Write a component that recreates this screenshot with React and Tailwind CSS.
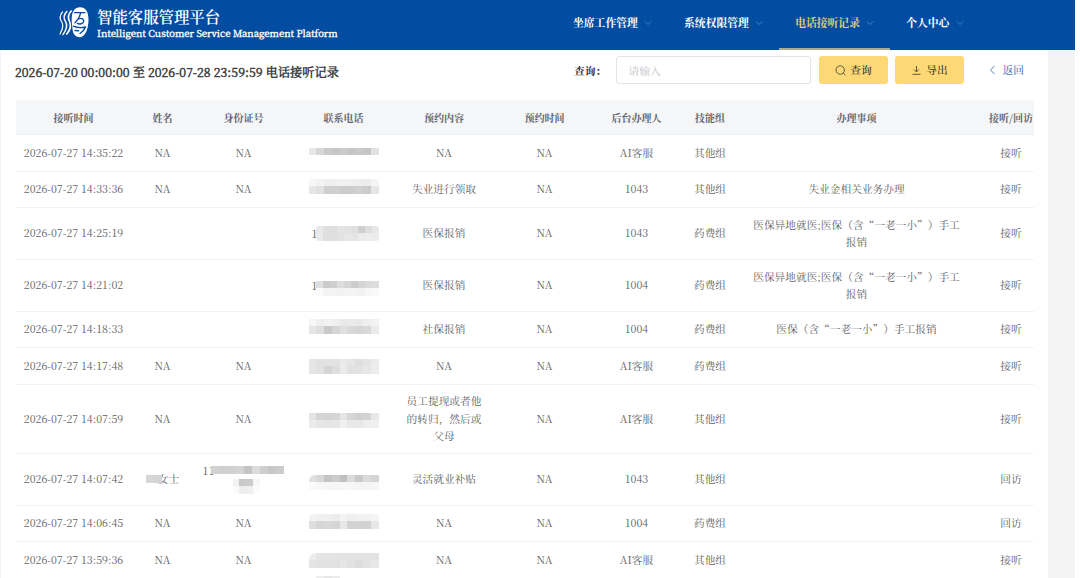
const navItems = [
  { label: '坐席工作管理' },
  { label: '系统权限管理' },
  { label: '电话接听记录', active: true },
  { label: '个人中心' },
];

const columns = ['接听时间', '姓名', '身份证号', '联系电话', '预约内容', '预约时间', '后台办理人', '技能组', '办理事项', '接听/回访'];

const LONG_MATTER = '医保异地就医;医保（含“一老一小”）手工报销';

// mask: grey levels of each pixelated band, from top to bottom
const records = [
  { time: '2026-07-27 14:35:22', name: 'NA', idNo: 'NA', content: 'NA', handler: 'AI客服', group: '其他组', matter: '', type: '接听', height: 'h-[37px]', maskClass: 'mt-[13px]',
    mask: [[231, 215, 202, 199, 202, 198, 201, 198, 226]] },
  { time: '2026-07-27 14:33:36', name: 'NA', idNo: 'NA', content: '失业进行领取', handler: '1043', group: '其他组', matter: '失业金相关业务办理', type: '接听', height: 'h-[36px]', maskClass: 'mt-[7px] rounded-t-[4px]',
    mask: [[246, 243, 240, 240, 241, 240, 238, 237, 245], [231, 225, 207, 208, 204, 204, 208, 203, 231]] },
  { time: '2026-07-27 14:25:19', name: '', idNo: '', content: '医保报销', handler: '1043', group: '药费组', matter: LONG_MATTER, type: '接听', height: 'h-[52px]', maskClass: 'mt-[18px] rounded-[3px]', prefix: '1',
    mask: [[233, 224, 222, 229, 227, 223, 207, 222, 231], [234, 224, 223, 226, 231, 229, 235, 237, 236]] },
  { time: '2026-07-27 14:21:02', name: '', idNo: '', content: '医保报销', handler: '1004', group: '药费组', matter: LONG_MATTER, type: '接听', height: 'h-[52px]', maskClass: 'mt-[21px]', prefix: '1',
    mask: [[223, 203, 206, 221, 214, 204, 213, 219, 222], [251, 244, 243, 242, 243, 244, 242, 247, 250]] },
  { time: '2026-07-27 14:18:33', name: '', idNo: '', content: '社保报销', handler: '1004', group: '药费组', matter: '医保（含“一老一小”）手工报销', type: '接听', height: 'h-[36px]', maskClass: 'mt-[7px]',
    mask: [[246, 239, 243, 239, 233, 234, 232, 239, 242], [230, 222, 201, 213, 224, 216, 213, 217, 235]] },
  { time: '2026-07-27 14:17:48', name: 'NA', idNo: 'NA', content: 'NA', handler: 'AI客服', group: '药费组', matter: '', type: '接听', height: 'h-[37px]', maskClass: 'mt-[11px]',
    mask: [[230, 225, 227, 226, 234, 229, 223, 228, 235], [230, 226, 213, 222, 235, 225, 226, 231, 237]] },
  { time: '2026-07-27 14:07:59', name: 'NA', idNo: 'NA', content: '员工提现或者他的转归，然后或父母', handler: 'AI客服', group: '其他组', matter: '', type: '接听', height: 'h-[69px]', maskClass: 'mt-[28px]',
    mask: [[228, 213, 212, 214, 229, 214, 208, 211, 232], [236, 231, 229, 230, 240, 232, 232, 238, 240]] },
  { time: '2026-07-27 14:07:42', masked: true, content: '灵活就业补贴', handler: '1043', group: '其他组', matter: '', type: '回访', height: 'h-[52px]', maskClass: 'mt-[21px] rounded-tl-[6px]',
    mask: [[224, 216, 196, 204, 191, 219, 201, 219, 213], [250, 247, 246, 245, 247, 246, 244, 244, 246]] },
  { time: '2026-07-27 14:06:45', name: 'NA', idNo: 'NA', content: 'NA', handler: '1004', group: '药费组', matter: '', type: '回访', height: 'h-[36px]', maskClass: 'mt-[8px] rounded-t-[4px]',
    mask: [[242, 240, 239, 236, 243, 239, 241, 241, 244], [222, 214, 216, 213, 232, 210, 211, 210, 231]] },
  { time: '2026-07-27 13:59:36', name: 'NA', idNo: 'NA', content: 'NA', handler: 'AI客服', group: '其他组', matter: '', type: '接听', height: 'h-[37px]', maskClass: 'mt-[11px] -mb-[12px] rounded-tl-[7px]',
    mask: [[236, 229, 228, 227, 227, 226, 227, 226, 226], [229, 226, 226, 225, 230, 225, 221, 226, 232], [255, 255, 255, 255, 255, 255, 255, 255, 255], [255, 238, 230, 235, 255, 255, 255, 255, 255]] },
];

const GRID = 'grid grid-cols-[116px_62px_100px_100px_101px_100px_84px_63px_230px_79px] w-[1035px]';

const Mosaic = ({ rows, className }) => (
  <div className={`relative overflow-hidden ${className}`}>
    {rows.map((row, i) => (
      <div key={i} className="flex h-[7.8px]">
        {row.map((level, j) => (
          <span key={j} className="flex-1" style={{ backgroundColor: `rgb(${level}, ${level}, ${level})` }} />
        ))}
      </div>
    ))}
  </div>
);

const Chevron = () => (
  <svg className="ml-[6.3px] h-2 w-2" viewBox="0 0 8 8" fill="none" stroke="#5f8fc4" strokeWidth="0.8">
    <path d="M1 2.5 4 5.5 7 2.5" />
  </svg>
);

const Logo = () => (
  <svg className="h-[32px] w-[32px]" viewBox="0 0 32 32" fill="none">
    <g stroke="#fff" strokeLinecap="round">
      <path d="M4.5 5C1 9 1.500 11.500 3.500 14.500S5.500 21 2 27" strokeWidth="1.2" />
      <path d="M8.800 4.500C5 8.500 5.500 11.500 7.500 14.500S9 22 5 27.500" strokeWidth="1.500" />
      <path d="M13.200 4C9.500 8 9.800 11 11.500 14.500S13 22 8.800 27" strokeWidth="1.700" />
    </g>
    <path d="M22 .2C27.800 .2 30.500 5 30.500 12.500 30.500 22 27 30.200 22 30.200c-5 0-7-3.500-7.500-8.200C14.200 17 13.300 14 13.800 10 14.300 4 17 .2 22 .2Z" fill="#fff" />
    <g stroke="#024da1" strokeWidth="1.400" strokeLinecap="round" strokeLinejoin="round">
      <path d="M16.500 5.600h10.500" />
      <path d="M22.500 6.200c-.8 3.800-2.500 6.800-5.500 9.500" />
      <path d="M20.800 11.800c3-1.200 5.500.2 4.800 2.800-.6 2.200-4 3-6.200 1.800" />
      <path d="M15.500 19.200c3.500 1.600 8 1.800 12 .8-1 2.800-2.800 4.800-5.500 6.500" />
      <path d="M17 23.500l3.500.2" />
    </g>
  </svg>
);

const Header = () => (
  <header className="flex h-[49.5px] w-[1075px] bg-[#024da1] text-white">
    <div className="flex w-[557px] items-start pl-[58px] pt-[7px]">
      <Logo />
      <div className="ml-[7px] whitespace-nowrap">
        <h1 className="-mt-px text-[15.4px] leading-[20px] font-semibold">智能客服管理平台</h1>
        <p className="mt-px text-[9.6px] leading-[12px] [-webkit-text-stroke:0.35px_white]">Intelligent Customer Service Management Platform</p>
      </div>
    </div>
    <nav className="flex text-[10.8px] font-bold">
      {navItems.map((item) => (
        <a
          key={item.label}
          className={`flex items-center border-b-[2.5px] px-4 pb-[2px] ${item.active ? 'border-[#a5ae91] text-[#e6cd83]' : 'border-transparent'}`}
        >
          {item.label}
          <Chevron />
        </a>
      ))}
    </nav>
  </header>
);

const Toolbar = () => (
  <div className="flex h-[50px] items-start pt-[6.5px] pl-[14px] text-[10.7px] text-[#303133]">
    <h2 className="w-[559px] text-[12.2px] leading-[31px] whitespace-nowrap [-webkit-text-stroke:0.4px_#303133]">
      2026-07-20 00:00:00 至 2026-07-28 23:59:59 电话接听记录
    </h2>
    <label className="w-[41.5px] leading-[29px] font-bold">查询：</label>
    <input
      placeholder="请输入"
      className="h-[28px] w-[195.5px] rounded-[3px] border border-[#e2e4e9] bg-white px-[12px] outline-none placeholder:text-[#c0c4cc]"
    />
    <button className="ml-2 flex h-[28px] w-[69px] items-center justify-center gap-1 rounded-[3px] bg-[#fdd976] font-medium">
      <svg className="h-[11px] w-[11px]" viewBox="0 0 11 11" fill="none" stroke="#4d4a3c" strokeWidth="0.9">
        <circle cx="5.2" cy="5" r="4.200" />
        <path d="M8.200 8 10.500 10.300" />
      </svg>
      查询
    </button>
    <button className="ml-[7px] flex h-[28px] w-[69px] items-center justify-center gap-1 rounded-[3px] bg-[#fdd976] font-medium">
      <svg className="h-[11px] w-[11px]" viewBox="0 0 11 11" fill="none" stroke="#4d4a3c" strokeWidth="0.9">
        <path d="M5.500 1v5.800M3 4.500l2.500 2.500L8 4.500M1.500 9.300h8" />
      </svg>
      导出
    </button>
    <a className="ml-[24.5px] flex h-[28px] items-center font-medium text-[#3f78b5]">
      <svg className="mr-[7px] h-[10px] w-[7px]" viewBox="0 0 7 10" fill="none" stroke="#5d86b0" strokeWidth="1">
        <path d="M5.500 1 1.500 5l4 4" />
      </svg>
      返回
    </a>
  </div>
);

const MaskedName = () => (
  <div className="flex items-center justify-center">
    <Mosaic rows={[[214, 212]]} className="z-10 -mr-[4px] w-[16px]" />
    女士
  </div>
);

const MaskedId = () => (
  <div className="self-start pt-[8px]">
    <div className="flex items-center justify-center leading-[17px]">
      11
      <Mosaic rows={[[210, 208, 209, 212, 196, 220, 206, 199, 203]]} className="-ml-[3px] w-[73px]" />
    </div>
    <Mosaic rows={[[242, 201, 203, 246], [249, 238, 239, 251]]} className="ml-[39px] w-[27px] rounded-b-[6px]" />
  </div>
);

const RecordRow = ({ record }) => (
  <div className={`${GRID} ${record.height} items-center border-b border-[#f0f2f5] text-center leading-[17.5px]`}>
    <div className="whitespace-nowrap">{record.time}</div>
    {record.masked ? <MaskedName /> : <div>{record.name}</div>}
    {record.masked ? <MaskedId /> : <div>{record.idNo}</div>}
    <div className={`flex items-start self-start ${record.prefix ? 'pl-[18px]' : 'pl-[15px]'}`}>
      {record.prefix && <span className="-mr-[2px] mt-[17px] w-[6px]">{record.prefix}</span>}
      <Mosaic rows={record.mask} className={`${record.prefix ? 'w-[63px]' : 'w-[70px]'} ${record.maskClass}`} />
    </div>
    <div className="px-[10px]">{record.content}</div>
    <div>NA</div>
    <div>{record.handler}</div>
    <div>{record.group}</div>
    <div className="px-[9px] [text-spacing-trim:space-all]">{record.matter}</div>
    <div>{record.type}</div>
  </div>
);

const RecordTable = () => (
  <div className="ml-[14.5px] w-[1018px] overflow-hidden">
    <div className={`${GRID} h-[35px] items-center border-b border-[#ebeef5] bg-[#f5f6f8] pt-[2px] text-center text-[10px] font-bold text-[#5f646e]`}>
      {columns.map((title) => (
        <div key={title} className="whitespace-nowrap">{title}</div>
      ))}
    </div>
    <div className="text-[10.7px] text-[#606266]">
      {records.map((record) => (
        <RecordRow key={record.time} record={record} />
      ))}
    </div>
  </div>
);

export default function App() {
  return (
    <div className="h-[578px] w-[1080px] overflow-hidden bg-white font-['Noto_Serif_CJK_SC','Noto_Sans_CJK_SC',serif]">
      <Header />
      <main className="h-[529px] w-[1075px] bg-[#f4f4f5]">
        <div className="ml-px h-full w-[1047px] bg-white">
          <Toolbar />
          <RecordTable />
        </div>
      </main>
    </div>
  );
}
